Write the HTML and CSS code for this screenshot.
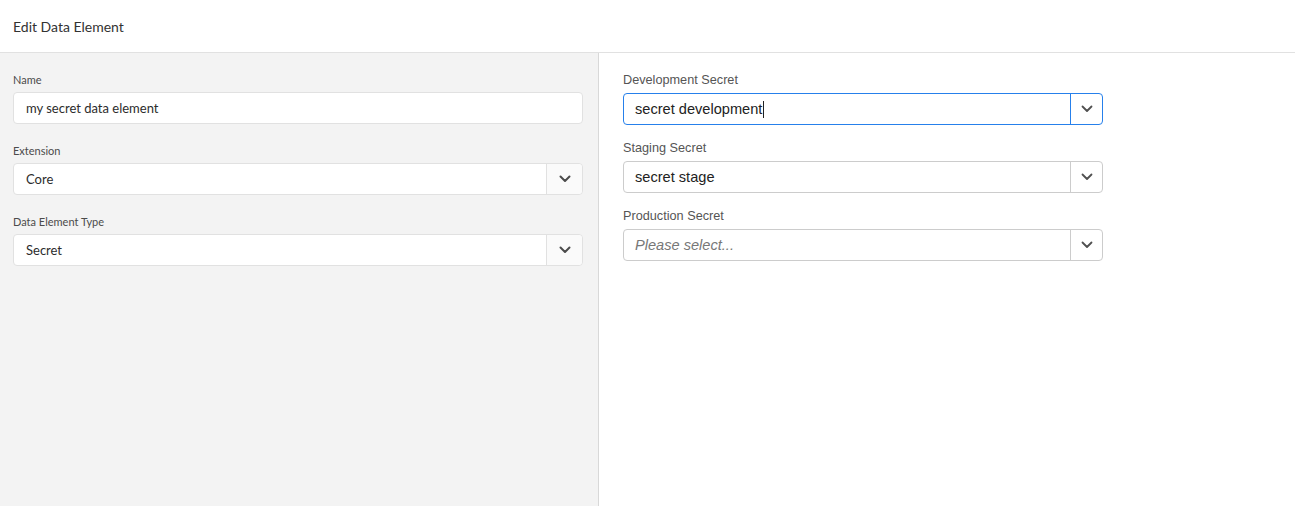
FILE: index.html
```html
<!DOCTYPE html>
<html>
<head>
<meta charset="utf-8">
<link rel="stylesheet" href="styles.css">
</head>
<body>
<header class="header"><h1 class="title">Edit Data Element</h1></header>
<main class="main">
  <section class="left">
    <div class="group">
      <label class="lbl">Name</label>
      <div class="field">my secret data element</div>
    </div>
    <div class="group">
      <label class="lbl">Extension</label>
      <div class="combo">
        <div class="combo-text">Core</div>
        <div class="combo-btn"><svg width="12" height="8" viewBox="0 0 12 8"><path d="M1.5 1.5 L6 6 L10.5 1.5" fill="none" stroke="#4b4b4b" stroke-width="2" stroke-linecap="round" stroke-linejoin="round"/></svg></div>
      </div>
    </div>
    <div class="group">
      <label class="lbl">Data Element Type</label>
      <div class="combo">
        <div class="combo-text">Secret</div>
        <div class="combo-btn"><svg width="12" height="8" viewBox="0 0 12 8"><path d="M1.5 1.5 L6 6 L10.5 1.5" fill="none" stroke="#4b4b4b" stroke-width="2" stroke-linecap="round" stroke-linejoin="round"/></svg></div>
      </div>
    </div>
  </section>
  <section class="right">
    <div class="rgroup">
      <label class="rlbl">Development Secret</label>
      <div class="rcombo focus">
        <div class="rcombo-text">secret development<span class="caret"></span></div>
        <div class="rcombo-btn"><svg width="12" height="8" viewBox="0 0 12 8"><path d="M1.5 1.5 L6 6 L10.5 1.5" fill="none" stroke="#505050" stroke-width="1.8" stroke-linecap="round" stroke-linejoin="round"/></svg></div>
      </div>
    </div>
    <div class="rgroup">
      <label class="rlbl">Staging Secret</label>
      <div class="rcombo">
        <div class="rcombo-text">secret stage</div>
        <div class="rcombo-btn"><svg width="12" height="8" viewBox="0 0 12 8"><path d="M1.5 1.5 L6 6 L10.5 1.5" fill="none" stroke="#505050" stroke-width="1.8" stroke-linecap="round" stroke-linejoin="round"/></svg></div>
      </div>
    </div>
    <div class="rgroup">
      <label class="rlbl">Production Secret</label>
      <div class="rcombo">
        <div class="rcombo-text placeholder">Please select...</div>
        <div class="rcombo-btn"><svg width="12" height="8" viewBox="0 0 12 8"><path d="M1.5 1.5 L6 6 L10.5 1.5" fill="none" stroke="#505050" stroke-width="1.8" stroke-linecap="round" stroke-linejoin="round"/></svg></div>
      </div>
    </div>
  </section>
</main>
</body>
</html>
```
FILE: styles.css
```css
html, body { margin: 0; padding: 0; }
body {
  width: 1295px;
  height: 506px;
  overflow: hidden;
  background: #fff;
  font-family: "Lato", "Open Sans", sans-serif;
  color: #2c2c2c;
  display: flex;
  flex-direction: column;
}
.header {
  height: 52px;
  border-bottom: 1px solid #e1e1e1;
  display: flex;
  align-items: center;
  padding-left: 13px;
  flex: none;
}
.title {
  margin: 0;
  font-size: 14px;
  font-weight: 400;
  color: #323232;
}
.main {
  flex: 1;
  display: flex;
}
.left {
  width: 585px;
  background: #f3f3f3;
  border-right: 1px solid #d8d8d8;
  padding: 20px 0 0 13px;
  flex: none;
}
.group { width: 570px; margin-bottom: 20px; }
.lbl {
  display: block;
  font-size: 11px;
  line-height: 14px;
  color: #4b4b4b;
  margin-bottom: 5px;
}
.field, .combo {
  box-sizing: border-box;
  height: 32px;
  background: #fff;
  border: 1px solid #e1e1e1;
  border-radius: 4px;
  font-size: 13px;
  color: #2c2c2c;
}
.field {
  padding: 0 12px;
  line-height: 30px;
}
.combo { display: flex; }
.combo-text { flex: 1; padding: 0 12px; line-height: 30px; }
.combo-btn {
  width: 35px;
  border-left: 1px solid #e1e1e1;
  background: #fafafa;
  border-radius: 0 4px 4px 0;
  display: flex;
  align-items: center;
  justify-content: center;
}
.right {
  flex: 1;
  padding: 20px 0 0 24px;
  font-family: "Liberation Sans", Arial, sans-serif;
}
.rgroup { width: 480px; margin-bottom: 16px; }
.rlbl {
  display: block;
  font-size: 12.7px;
  line-height: 15px;
  color: #555;
  margin-bottom: 5px;
}
.rcombo {
  box-sizing: border-box;
  height: 32px;
  border: 1px solid #cccccc;
  border-radius: 4px;
  display: flex;
  background: #fff;
}
.rcombo.focus { border-color: #2680eb; }
.rcombo-text {
  flex: 1;
  padding: 0 11px;
  line-height: 30px;
  font-size: 14.6px;
  color: #222;
}
.placeholder { font-style: italic; color: #777; }
.caret {
  display: inline-block;
  width: 1px;
  height: 17px;
  background: #222;
  vertical-align: -4px;
  margin-left: 1px;
}
.rcombo-btn {
  width: 31px;
  border-left: 1px solid #cccccc;
  display: flex;
  align-items: center;
  justify-content: center;
}
.rcombo.focus .rcombo-btn { border-left-color: #2680eb; }
```
